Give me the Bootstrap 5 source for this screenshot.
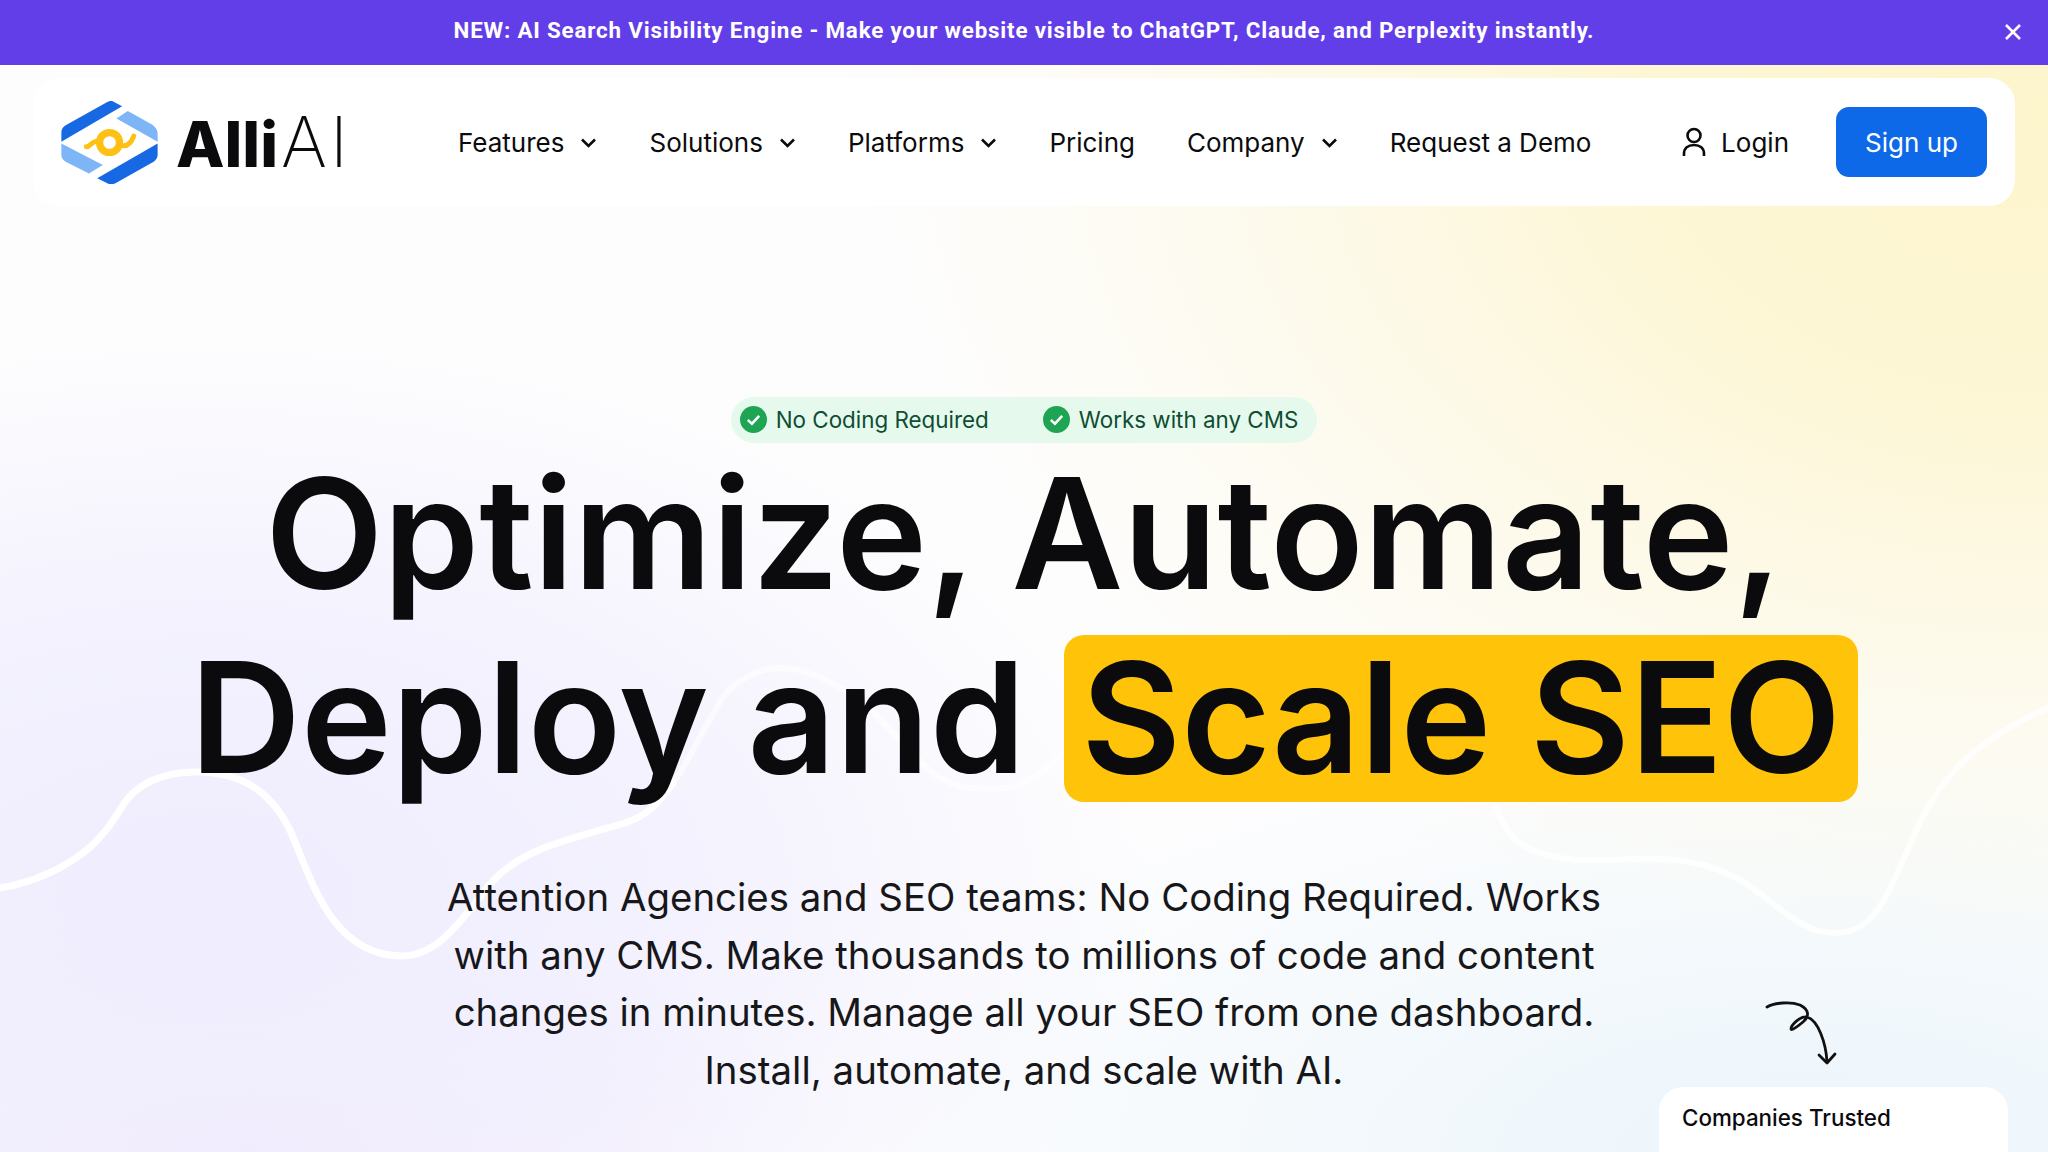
<!DOCTYPE html>
<html lang="en">
<head>
<meta charset="utf-8">
<title>Alli AI</title>
<link href="https://cdn.jsdelivr.net/npm/bootstrap@5.3.0/dist/css/bootstrap.min.css" rel="stylesheet">
<style>
html,body{height:100%;}
body{font-family:"Inter","Liberation Sans",sans-serif;color:#0b0b0d;overflow:hidden;height:1152px;background:#fff;}
.stage{position:relative;height:1152px;overflow:hidden;
 background:
  radial-gradient(1200px 860px at 100% 10%,#fdf5cc 0%,rgba(253,245,204,.8) 35%,rgba(253,245,204,.3) 70%,rgba(253,245,204,0) 100%),
  radial-gradient(950px 560px at 10% 78%,#efedfe 0%,rgba(239,237,254,.7) 50%,rgba(239,237,254,0) 100%),
  radial-gradient(620px 240px at 12% 100%,#f6ebfc 0%,rgba(246,235,252,0) 100%),
  radial-gradient(1000px 420px at 88% 100%,#ebf5fb 0%,rgba(235,245,251,0) 100%),
  #fdfdfe;}
.waves{position:absolute;left:0;top:0;width:2048px;height:1152px;pointer-events:none;}
.promo{height:65px;padding-bottom:3px;background:#623ee8;color:#fff;font-family:"Roboto","Liberation Sans",sans-serif;font-weight:700;font-size:22.4px;letter-spacing:.8px;position:relative;}
.promo-close{position:absolute;right:25px;top:22px;width:20px;height:20px;padding:0;border:0;background:none;}
.promo-close svg{display:block;}
.topbar{position:relative;margin:13px 33px 0 33px;height:128px;background:#fff;border-radius:26px;padding:0 28px 0 28px;}
.brand-mark{width:97px;height:83px;flex:none;}
.brand-word{display:inline-block;width:165px;white-space:nowrap;font-size:63px;line-height:1;font-weight:800;letter-spacing:0;color:#0b0b0d;margin-left:18px;font-family:"Inter",sans-serif;}
.brand-word span{font-size:70px;font-weight:200;letter-spacing:3px;margin-left:3px;}
.menu{margin-left:117px;gap:52px;}
.menu a{font-size:26px;color:#0b0b0d;text-decoration:none;display:flex;align-items:center;gap:16px;}
.menu svg{width:17px;height:11px;}
.login{font-size:26px;color:#0b0b0d;text-decoration:none;gap:15px;margin-right:47px;}
.signup{width:151px;height:70px;background:#0d69e8;border:0;border-radius:13px;font-size:26px;color:#fff;display:flex;align-items:center;justify-content:center;}
.hero{position:relative;text-align:center;padding-top:191px;}
.pill{display:inline-flex;align-items:center;height:46px;padding:0 19px 0 9px;background:#e5faed;border-radius:23px;color:#0f4d33;font-size:22.4px;}
.pill-item{display:flex;align-items:center;gap:9px;}
.pill-item+.pill-item{margin-left:54px;}
.pill svg{width:27px;height:27px;}
.headline{font-size:153.6px;font-weight:600;line-height:184px;letter-spacing:0;margin:-2px 0 0;color:#0b0b0d;}
.hl{background:#ffc40a;border-radius:20px;padding:0 17px;display:inline-block;line-height:165px;height:167px;}
.lede{font-size:38.4px;line-height:57.6px;width:1200px;margin:60px auto 0;color:#17171a;}
.arrow{position:absolute;left:1760px;top:998px;width:80px;height:70px;}
.trust{position:absolute;left:1659px;top:1087px;width:349px;height:120px;background:#fff;border-radius:24px;padding:18px 23px;font-size:22.4px;font-weight:500;line-height:1.2;}
.faces{display:flex;gap:0;margin:18px 0 0 38px;}
.face{width:40px;height:40px;border-radius:50%;margin-right:-9.5px;background:#b9b1a6;border:2px solid #fff;}
.face+.face{background:#a8adb3;}
</style>
</head>
<body>
<div class="stage">
<svg class="waves" viewBox="0 0 2048 1152" fill="none" stroke="#fff" stroke-linecap="round"><path d="M0 888C35 882 65 868 89 848C105 834 112 822 120 810C135 782 165 772 196 772C240 772 270 790 290 830C310 875 330 956 402 956C440 956 465 915 491 883C520 850 560 842 625 823C650 815 660 800 673 783" stroke-width="7"/><path d="M673 783C685 768 705 725 723 697C735 680 760 668 780 668C805 668 830 680 860 700C880 715 905 750 933 773C950 785 965 788 973 788C995 790 1015 788 1023 783C1040 775 1055 762 1063 753" stroke-width="6" stroke-opacity=".6"/><path d="M1497 807C1505 835 1520 855 1578 860C1610 862 1650 855 1689 862C1735 870 1755 890 1772 903C1790 917 1810 933 1834 933C1875 933 1885 900 1912 840C1935 785 1965 745 2048 708" stroke-width="6" stroke-opacity=".8"/></svg>
<div class="promo d-flex align-items-center justify-content-center">
 <span>NEW: AI Search Visibility Engine - Make your website visible to ChatGPT, Claude, and Perplexity instantly.</span>
 <button class="promo-close" type="button" aria-label="Close"><svg width="20" height="20" viewBox="0 0 20 20"><path d="M3 3L17 17M17 3L3 17" stroke="#fff" stroke-width="2.6"/></svg></button>
</div>
<nav class="topbar d-flex align-items-center">
 <a class="d-flex align-items-center text-decoration-none" href="#">
 <svg class="brand-mark" viewBox="62 32 290 250"><path d="M62 155V125C62 117 68 109 75 105L195 38C203 33 209 31 215 32L245 48Z" fill="#1669e2"/><path d="M228 85L262 62L335 103C345 110 352 120 352 130V155Z" fill="#7db5f7"/><path d="M352 160L170 265L205 282C212 284 218 283 225 280L340 215C347 210 352 203 352 195Z" fill="#1669e2"/><path d="M62 160V195C62 204 67 210 75 215L145 250L187 225Z" fill="#7db5f7"/><circle cx="207" cy="157" r="30" fill="none" stroke="#fdc116" stroke-width="22"/><path d="M137 170C150 170 150 155 170 152M240 165C255 170 270 165 280 138" fill="none" stroke="#fdc116" stroke-width="15" stroke-linecap="round"/></svg>
 <span class="brand-word">Alli<span>AI</span></span></a>
 <div class="menu d-flex align-items-center">
 <a href="#">Features <svg viewBox="0 0 17 11"><path d="M2 2.5L8.5 9L15 2.5" fill="none" stroke="#0b0b0d" stroke-width="2.6"/></svg></a>
 <a href="#">Solutions <svg viewBox="0 0 17 11"><path d="M2 2.5L8.5 9L15 2.5" fill="none" stroke="#0b0b0d" stroke-width="2.6"/></svg></a>
 <a href="#">Platforms <svg viewBox="0 0 17 11"><path d="M2 2.5L8.5 9L15 2.5" fill="none" stroke="#0b0b0d" stroke-width="2.6"/></svg></a>
 <a href="#">Pricing</a>
 <a href="#">Company <svg viewBox="0 0 17 11"><path d="M2 2.5L8.5 9L15 2.5" fill="none" stroke="#0b0b0d" stroke-width="2.6"/></svg></a>
 <a href="#">Request a Demo</a>
 </div>
 <a class="login d-flex align-items-center ms-auto" href="#"><svg width="24" height="30" viewBox="0 0 24 30" fill="none" stroke="#0b0b0d" stroke-width="2.6"><circle cx="12" cy="8.5" r="6.5"/><path d="M2 29V27C2 21 6 18 12 18C18 18 22 21 22 27V29"/></svg>Login</a>
 <a class="signup text-decoration-none" href="#">Sign up</a>
</nav>
<main class="hero">
 <div class="pill"><span class="pill-item"><svg viewBox="0 0 26 26"><circle cx="13" cy="13" r="13" fill="#1ea453"/><path d="M7.5 13.5L11.5 17L18.5 9.5" fill="none" stroke="#fff" stroke-width="2.4"/></svg>No Coding Required</span><span class="pill-item"><svg viewBox="0 0 26 26"><circle cx="13" cy="13" r="13" fill="#1ea453"/><path d="M7.5 13.5L11.5 17L18.5 9.5" fill="none" stroke="#fff" stroke-width="2.4"/></svg>Works with any CMS</span></div>
 <h1 class="headline">Optimize, Automate,<br>Deploy and <span class="hl">Scale SEO</span></h1>
 <p class="lede">Attention Agencies and SEO teams: No Coding Required. Works with any CMS. Make thousands to millions of code and content changes in minutes. Manage all your SEO from one dashboard. Install, automate, and scale with AI.</p>
</main>
<svg class="arrow" viewBox="0 0 80 70" fill="none" stroke="#111" stroke-width="2.8" stroke-linecap="round" stroke-linejoin="round"><path d="M7 9C14 5 30 3 40 7C50 12 49 19 43 24C37 29 31 33 31 31C31 27 40 18 47 19C58 22 66 45 67 64"/><path d="M59 57L67 65L75 56"/></svg>
<div class="trust">Companies Trusted<div class="faces"><span class="face"></span><span class="face"></span><span class="face"></span><span class="face"></span></div></div>
</div>
<script src="https://cdn.jsdelivr.net/npm/bootstrap@5.3.0/dist/js/bootstrap.bundle.min.js"></script>
</body>
</html>
